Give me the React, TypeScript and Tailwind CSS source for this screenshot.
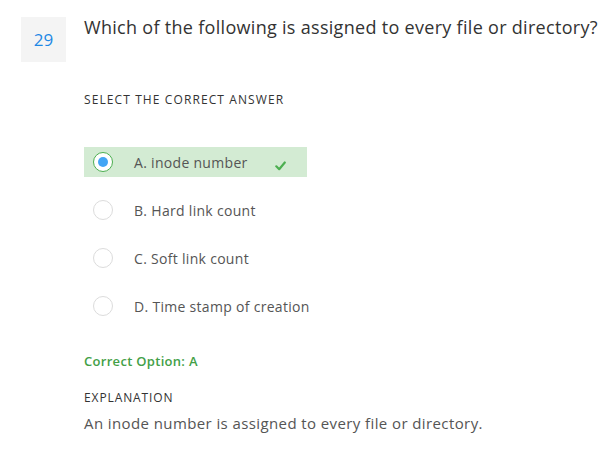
const options = [
  { key: "A", label: "inode number", selected: true },
  { key: "B", label: "Hard link count" },
  { key: "C", label: "Soft link count" },
  { key: "D", label: "Time stamp of creation" },
];

function Radio({ selected }: { selected?: boolean }) {
  if (selected) {
    return (
      <span className="flex items-center justify-center w-[20px] h-[20px] rounded-full border border-[#4caf50] bg-white">
        <span className="w-[10px] h-[10px] rounded-full bg-[#42a5f5]" />
      </span>
    );
  }
  return <span className="w-[20px] h-[20px] shrink-0 rounded-full border border-[#dcdcdc] bg-white" />;
}

export default function App() {
  return (
    <div className="w-[613px] h-[456px] bg-white font-['Open_Sans',sans-serif] text-[#333]">
      <div className="flex pt-[17px] pl-[21px]">
        <div className="w-[45px] h-[45px] bg-[#f4f4f4] flex items-center justify-center text-[17px] text-[#1e88e5]">
          29
        </div>
        <h2 className="ml-[18px] -mt-[2px] text-[18px] leading-[24px] tracking-[0.3px] text-[#333]">
          Which of the following is assigned to every file or directory?
        </h2>
      </div>

      <div className="pl-[84px]">
        <p className="mt-[31px] text-[12px] leading-[14px] font-medium tracking-[1.1px] text-[#333]">
          SELECT THE CORRECT ANSWER
        </p>

        <ul className="mt-[40px] flex flex-col gap-[18px]">
          {options.map((o) => (
            <li
              key={o.key}
              className={`flex items-center w-[223px] h-[30px] pl-[9px] whitespace-nowrap ${
                o.selected ? "bg-[#d3ebd3]" : ""
              }`}
            >
              <Radio selected={o.selected} />
              <span className="ml-[21px] text-[14px] tracking-[0.3px] text-[#555]">
                {o.key}. {o.label}
              </span>
              {o.selected && (
                <svg className="ml-[27px] mt-[8px]" width="11" height="10" viewBox="0 0 11 10" fill="none">
                  <path d="M1.3 5.3L4.2 8.2L9.8 1.5" stroke="#4caf50" strokeWidth="2.2" strokeLinecap="round" strokeLinejoin="round" />
                </svg>
              )}
            </li>
          ))}
        </ul>

        <p className="mt-[31px] text-[13px] font-semibold tracking-[0.3px] text-[#43a047]">Correct Option: A</p>
        <p className="mt-[17px] text-[12px] font-medium tracking-[0.9px] text-[#333]">EXPLANATION</p>
        <p className="mt-[5px] text-[15px] tracking-[0.4px] text-[#555]">An inode number is assigned to every file or directory.</p>
      </div>
    </div>
  );
}
